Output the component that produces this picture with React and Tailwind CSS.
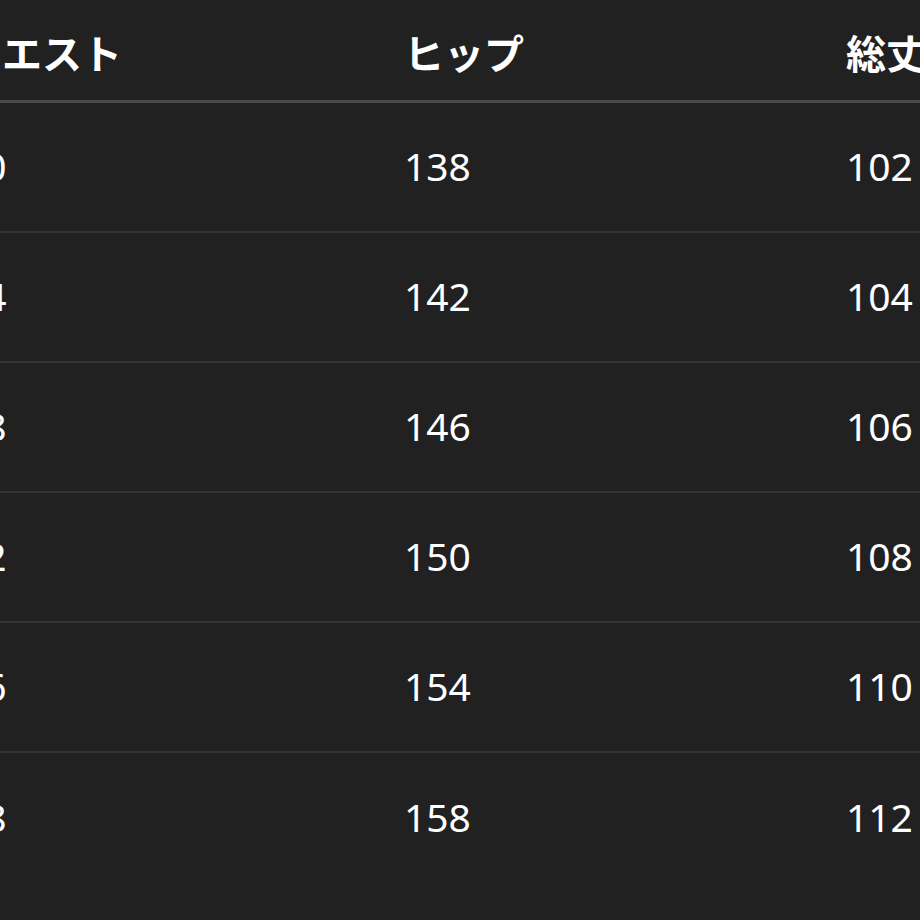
const headers = ['ウエスト', 'ヒップ', '総丈'];

const rows = [
    ['70', '138', '102'],
    ['74', '142', '104'],
    ['78', '146', '106'],
    ['82', '150', '108'],
    ['86', '154', '110'],
    ['88', '158', '112'],
];

export default function App() {
    return (
        <div className="w-[920px] h-[920px] overflow-hidden bg-[#212121] text-white" style={{ fontFamily: '"Noto Sans", "Noto Sans CJK JP", sans-serif' }}>
            <div className="-ml-[38px] w-[1326px]">
                <div className="flex h-[103px] items-center border-b-[3px] border-[#4a4a4a] pt-[4px]">
                    {headers.map((h) => (
                        <div key={h} className="w-[442px] shrink-0 text-[40px] font-semibold leading-none" style={{ fontFamily: '"Noto Sans CJK JP", sans-serif' }}>
                            {h}
                        </div>
                    ))}
                </div>
                {rows.map((row, i) => (
                    <div key={i} className={`flex h-[130px] items-center pb-[4px] ${i < rows.length - 1 ? 'border-b-2 border-[#333333]' : ''}`}>
                        {row.map((v, j) => (
                            <div key={j} className="w-[442px] shrink-0 text-[39px] leading-none">
                                {v}
                            </div>
                        ))}
                    </div>
                ))}
            </div>
        </div>
    );
}
